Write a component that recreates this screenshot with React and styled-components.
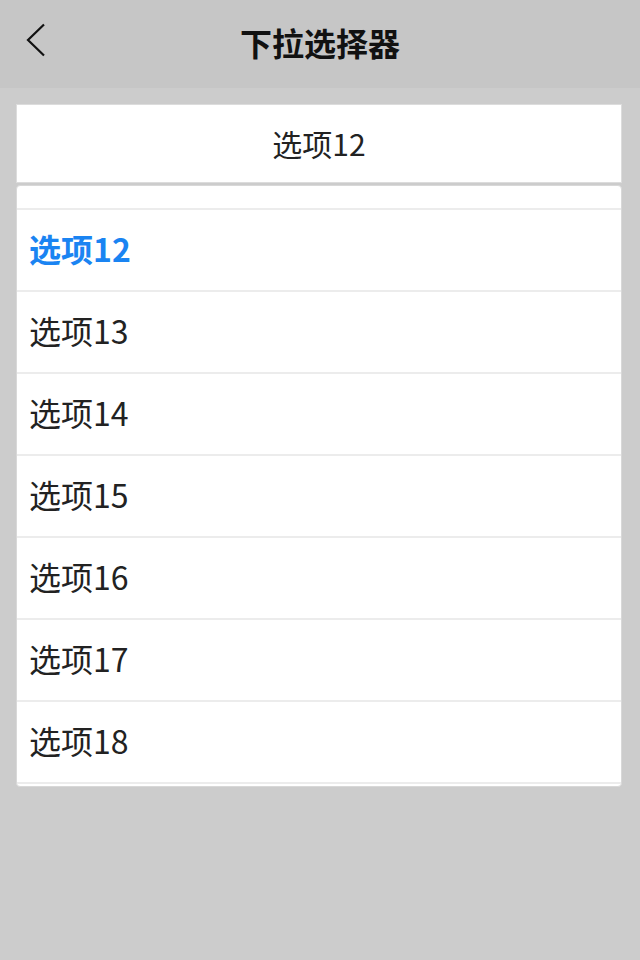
import React, { useLayoutEffect, useRef, useState } from "react";
import styled, { createGlobalStyle } from "styled-components";

const Global = createGlobalStyle`
  html, body { margin: 0; padding: 0; background: #cccccc; }
  body { font-family: "Noto Sans CJK SC", "Noto Sans", sans-serif; }
  * { box-sizing: border-box; }
`;

const Page = styled.div`
  width: 640px;
  height: 960px;
  background: #cccccc;
  display: flex;
  flex-direction: column;
`;

const Header = styled.header`
  height: 88px;
  background: #c6c6c6;
  display: flex;
  align-items: center;
  justify-content: center;
  padding-bottom: 4px;
  position: relative;
`;

const BackButton = styled.button`
  position: absolute;
  left: 22px;
  top: 21px;
  width: 28px;
  height: 40px;
  padding: 0;
  border: none;
  background: transparent;
  display: flex;
  align-items: center;
  justify-content: center;
`;

const Title = styled.h1`
  margin: 0;
  font-size: 32px;
  font-weight: 700;
  color: #111;
  line-height: 1;
`;

const Body = styled.main`
  padding: 16px 18px 0 16px;
  display: flex;
  flex-direction: column;
  gap: 2px;
`;

const SelectBox = styled.div`
  height: 79px;
  background: #fff;
  border: 1px solid #dcdcdc;
  display: flex;
  align-items: center;
  justify-content: center;
  padding-bottom: 2px;
  font-size: 30px;
  color: #222;
`;

const List = styled.div`
  height: 602px;
  background: #fff;
  border: 1px solid #d8d8d8;
  border-radius: 4px;
  overflow: hidden;
`;

const Item = styled.div`
  height: 82px;
  border-bottom: 2px solid #ececec;
  display: flex;
  align-items: center;
  padding: 0 0 4px 12px;
  font-size: 32px;
  color: ${(p) => (p.$active ? "#1a84f2" : "#222")};
  font-weight: ${(p) => (p.$active ? 700 : 400)};
`;

const options = Array.from({ length: 20 }, (_, i) => `选项${i + 1}`);

export default function App() {
  const [value] = useState("选项12");
  const listRef = useRef(null);
  useLayoutEffect(() => {
    if (listRef.current) listRef.current.scrollTop = 878;
  }, []);
  return (
    <>
      <Global />
      <Page>
        <Header>
          <BackButton aria-label="返回">
            <svg width="22" height="36" viewBox="0 0 22 36" fill="none">
              <path d="M19 1.5 L3 17 L19 32.5" stroke="#111" strokeWidth="2.2" />
            </svg>
          </BackButton>
          <Title>下拉选择器</Title>
        </Header>
        <Body>
          <SelectBox>{value}</SelectBox>
          <List ref={listRef}>
            {options.map((o) => (
              <Item key={o} $active={o === value}>
                {o}
              </Item>
            ))}
          </List>
        </Body>
      </Page>
    </>
  );
}
